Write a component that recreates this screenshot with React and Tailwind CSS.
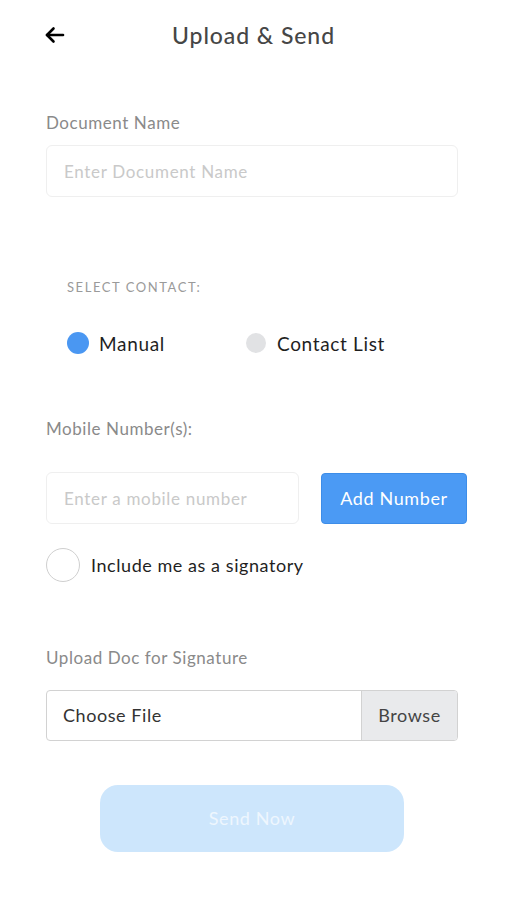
import { useState } from "react";

export default function App() {
  const [mode, setMode] = useState("manual");

  const labelClass = "text-[17px] text-[#8a8a8a] leading-none";
  const inputClass =
    "h-[52px] shrink-0 rounded-[6px] border border-[#efefef] bg-white px-[17px] text-[17px] text-[#333] placeholder:text-[#c9c9c9] outline-none tracking-[0.04em]";

  return (
    <div className="min-h-[900px] w-[507px] bg-white font-['Lato','Noto_Sans',sans-serif] tracking-[0.035em]">
      <div className="flex h-[70px] items-center px-[44px]">
        <button className="w-[22px] text-black">
          <svg width="21" height="18" viewBox="0 0 21 18" fill="none" stroke="currentColor" strokeWidth="2.6" strokeLinecap="round" strokeLinejoin="round">
            <path d="M19 9H3" />
            <path d="M9.5 2.5L3 9l6.5 6.5" />
          </svg>
        </button>
        <h1 className="flex-1 pr-[22px] text-center text-[23px] font-medium leading-none text-[#464646] tracking-[0.04em]">
          Upload &amp; Send
        </h1>
      </div>

      <div className="px-[46px] pr-[49px]">
        <div className="mt-[44px] flex flex-col gap-[14px]">
          <label className={labelClass}>Document Name</label>
          <input className={inputClass} placeholder="Enter Document Name" />
        </div>

        <div className="mt-[84px] pl-[21px] text-[13px] tracking-[0.12em] leading-none text-[#9a9a9a]">
          SELECT CONTACT:
        </div>

        <div className="mt-[38px] flex items-center pl-[21px] text-[19px] leading-none text-[#1f1f1f]">
          <button onClick={() => setMode("manual")} className="flex w-[179px] items-center gap-[10px] tracking-[0.035em]">
            <span className={mode === "manual" ? "h-[22px] w-[22px] rounded-full bg-[#4a97f2]" : "h-[22px] w-[22px] rounded-full bg-[#e1e2e4]"} />
            Manual
          </button>
          <button onClick={() => setMode("list")} className="flex items-center gap-[11px] tracking-[0.035em]">
            <span className={mode === "list" ? "h-[20px] w-[20px] rounded-full bg-[#4a97f2]" : "h-[20px] w-[20px] rounded-full bg-[#e1e2e4]"} />
            Contact List
          </button>
        </div>

        <div className="mt-[66px] flex flex-col">
          <label className={labelClass}>Mobile Number(s):</label>
          <div className="mt-[35px] flex items-center gap-[22px]">
            <input className={inputClass + " w-[253px]"} placeholder="Enter a mobile number" />
            <button className="h-[51px] w-[146px] shrink-0 rounded-[4px] border border-[#3d8de8] bg-[#4b9af4] text-[18px] text-white tracking-[0.035em]">
              Add Number
            </button>
          </div>
        </div>

        <label className="mt-[24px] flex items-center gap-[11px] text-[18px] leading-none text-[#1f1f1f]">
          <span className="h-[34px] w-[34px] rounded-full border border-[#cfcfcf] bg-white" />
          Include me as a signatory
        </label>

        <div className="mt-[67px] flex flex-col gap-[24px]">
          <label className={labelClass}>Upload Doc for Signature</label>
          <div className="flex h-[51px] overflow-hidden rounded-[4px] border border-[#d2d2d2]">
            <div className="flex flex-1 items-center px-[16px] text-[18px] text-[#333]">Choose File</div>
            <div className="flex w-[96px] items-center justify-center border-l border-[#d2d2d2] bg-[#e9eaec] text-[18px] text-[#444]">
              Browse
            </div>
          </div>
        </div>

        <div className="mt-[44px] flex justify-center">
          <button className="h-[67px] w-[304px] rounded-[18px] bg-[#cde6fc] text-[18px] text-[#eef6fe] tracking-[0.035em]">
            Send Now
          </button>
        </div>
      </div>
    </div>
  );
}
